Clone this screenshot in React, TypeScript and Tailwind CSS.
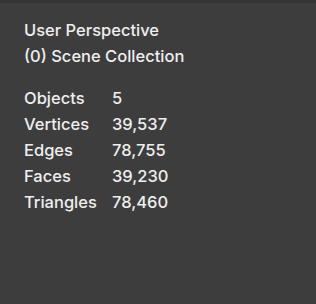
export default function App() {
  const stats: [string, string][] = [
    ["Objects", "5"],
    ["Vertices", "39,537"],
    ["Edges", "78,755"],
    ["Faces", "39,230"],
    ["Triangles", "78,460"],
  ];
  return (
    <div
      className="w-[316px] h-[304px] bg-[#3d3d3d] border-t-[3px] border-[#343434] text-[#efefef] text-[16.5px] leading-[26px] font-medium"
      style={{ fontFamily: "Inter, 'DejaVu Sans', sans-serif" }}
    >
      <div className="pl-[24px] pt-[14px]">
        <div>User Perspective</div>
        <div>(0) Scene Collection</div>
        <div className="mt-[16px] grid grid-cols-[88px_auto]">
          {stats.map(([k, v]) => (
            <div key={k} className="contents">
              <div>{k}</div>
              <div>{v}</div>
            </div>
          ))}
        </div>
      </div>
    </div>
  );
}
